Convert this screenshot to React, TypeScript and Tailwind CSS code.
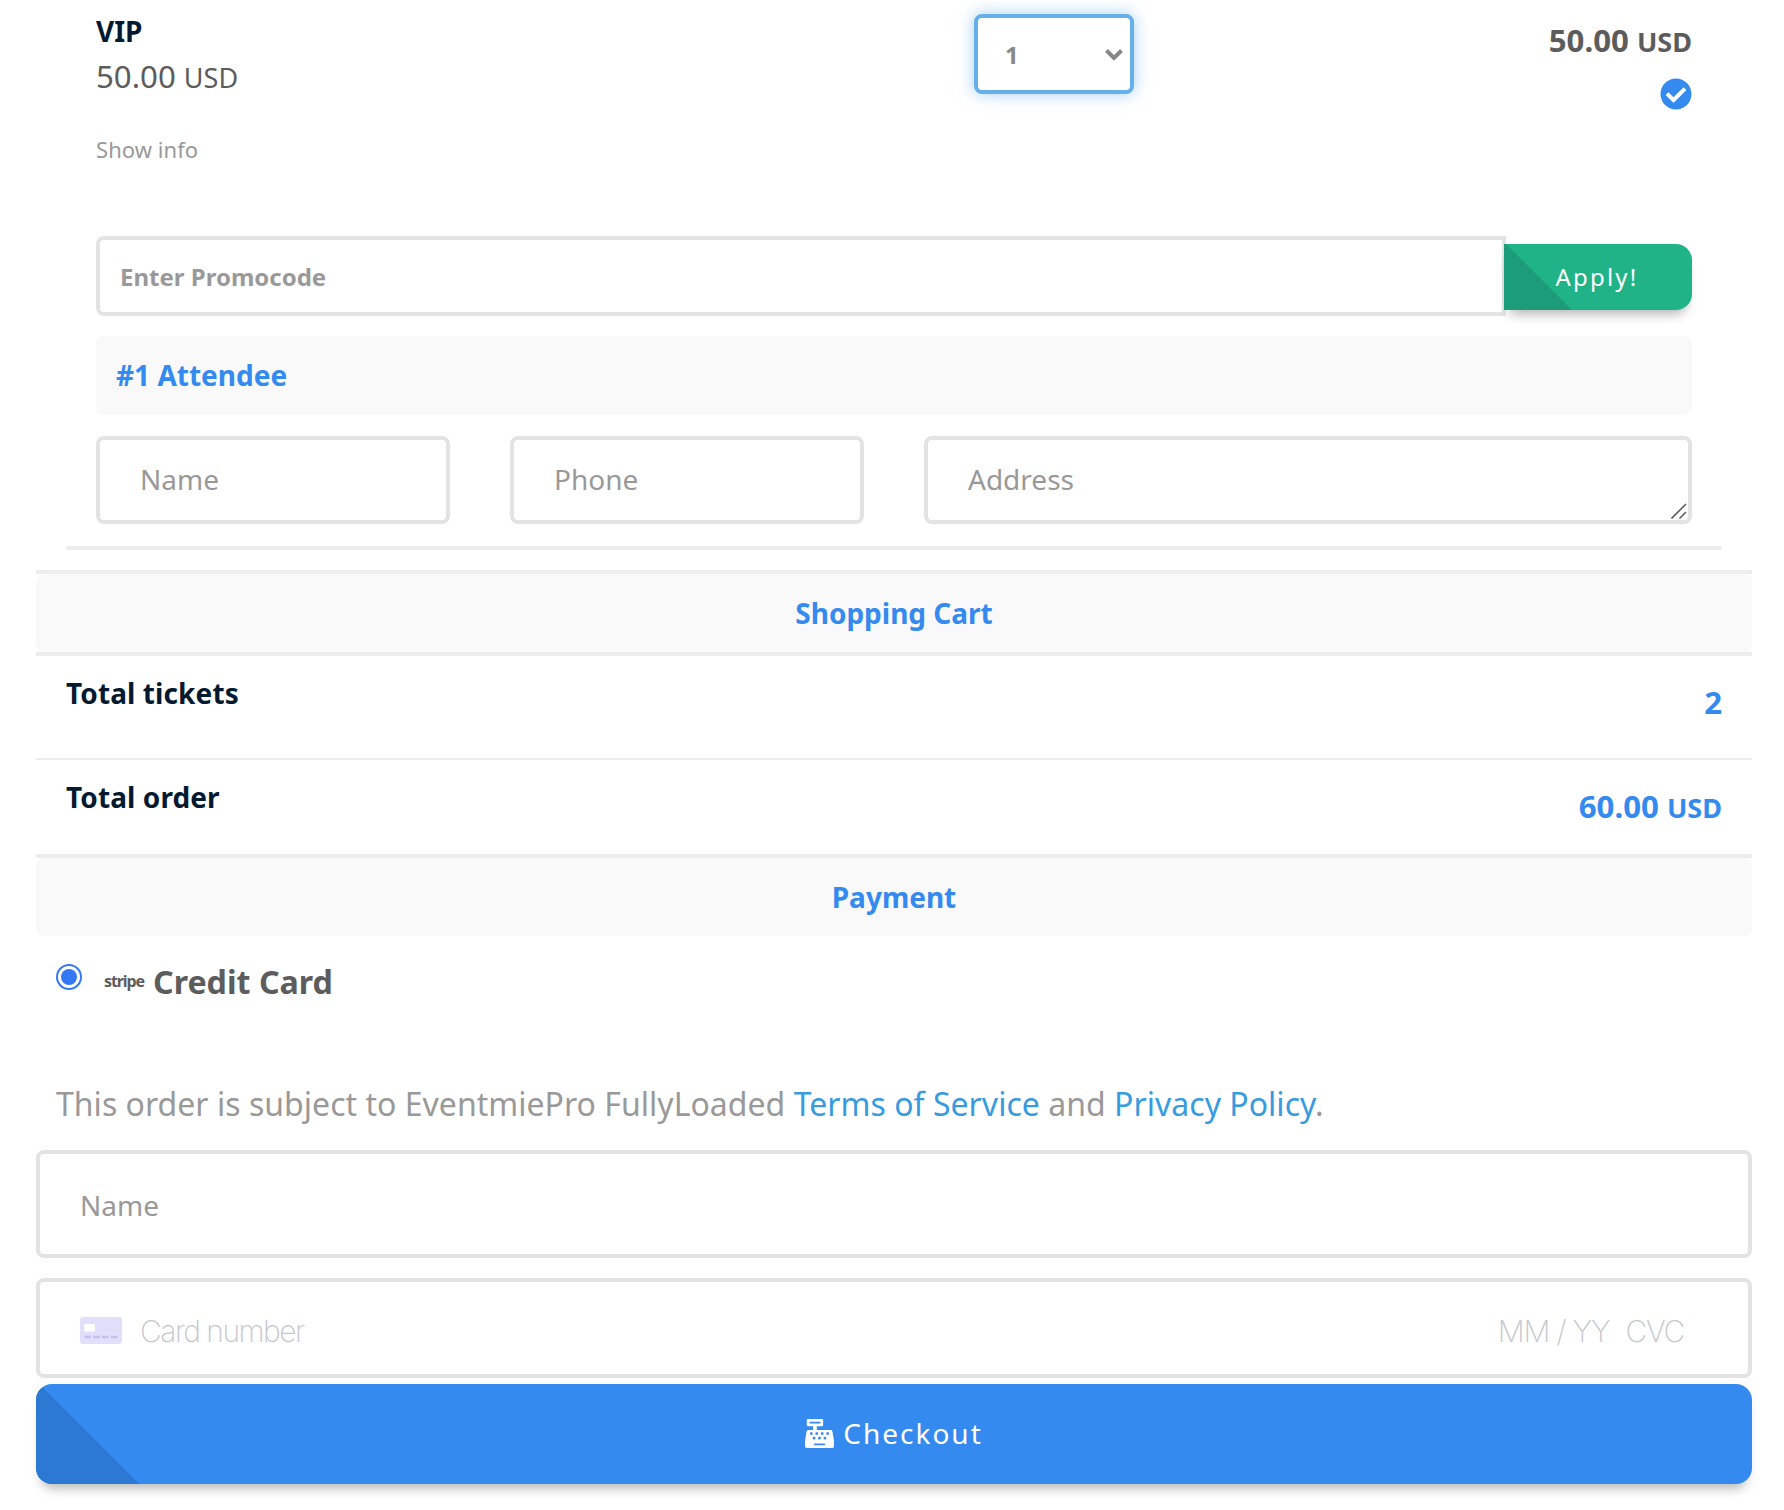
import type { ReactNode } from 'react';
import { FaCashRegister, FaCheckCircle } from 'react-icons/fa';

const field =
  'block border-4 border-[#e3e3e3] rounded-lg bg-white text-[28px] text-[#555] placeholder:text-[#999] placeholder:opacity-100 outline-none';

function Price({ amount, className }: { amount: string; className: string }) {
  return (
    <div className={className}>
      {amount} <span className="text-[27px] leading-none">USD</span>
    </div>
  );
}

function SectionTitle({ children, className = '' }: { children: ReactNode; className?: string }) {
  return (
    <h2 className={`rounded-lg bg-[#f9f9f9] text-[28px] font-bold leading-[78px] text-[#348aee] ${className}`}>
      {children}
    </h2>
  );
}

function TicketRow() {
  return (
    <div className="flex h-[236px] items-start justify-between">
      <div className="w-[878px] pt-[11px]">
        <h3 className="text-[28px] font-bold leading-[40px] text-[#041a30]">VIP</h3>
        <Price amount="50.00" className="text-[31.2px] leading-[50px] text-[#5c5c5c]" />
        <a className="mt-[33px] block text-[22px] leading-[30px] tracking-[0.05px] text-[#999]">Show info</a>
      </div>
      <div className="mt-[14px] flex h-20 w-40 items-center justify-between rounded-lg border-4 border-[#66afe9] bg-white pl-[27px] pr-[7px] text-2xl font-bold text-[#888] shadow-[0_0_16px_rgba(102,175,233,0.6)]">
        <span className="pt-[2px]">1</span>
        <svg className="mt-px h-[14px] w-[18px]" viewBox="0 0 18 14" fill="none" stroke="#888" strokeWidth="4">
          <path d="M1.5 2.5 9 10l7.5-7.5" />
        </svg>
      </div>
      <div className="flex flex-1 flex-col items-end pt-5">
        <Price amount="50.00" className="text-[31.2px] font-bold leading-[40px] text-[#5c5c5c]" />
        <FaCheckCircle className="mt-[18px] size-8 text-[#348aee]" />
      </div>
    </div>
  );
}

function Promocode() {
  return (
    <div className="flex items-start">
      <input
        placeholder="Enter Promocode"
        className="h-20 w-[1410px] rounded-l-lg border-4 border-[#e3e3e3] bg-white px-5 text-2xl font-bold text-[#555] outline-none placeholder:text-[#999] placeholder:opacity-100"
      />
      <button className="relative -ml-[2px] mt-2 h-[66px] flex-1 rounded-r-2xl bg-[#20b387] text-2xl tracking-[2.2px] text-white shadow-[0_10px_12px_-6px_rgba(0,0,0,0.3)]">
        <span className="absolute left-0 top-0 h-full w-[68px] bg-[#1c9c79] [clip-path:polygon(0_0,2px_0,100%_100%,0_100%)]" />
        <span className="relative pr-[2px]">Apply!</span>
      </button>
    </div>
  );
}

function AttendeeFields() {
  return (
    <div className="mt-[21px] flex h-[88px]">
      <input placeholder="Name" className={`h-[88px] w-[354px] px-10 pb-[2px] ${field}`} />
      <input placeholder="Phone" className={`ml-[60px] h-[88px] w-[354px] px-10 pb-[2px] ${field}`} />
      <div className="relative ml-[60px] flex-1">
        <textarea
          placeholder="Address"
          className={`h-[88px] w-full resize-none overflow-hidden px-10 py-[19px] leading-10 ${field}`}
        />
        <svg
          className="absolute bottom-[5px] right-[5px] h-4 w-4"
          viewBox="0 0 16 16"
          fill="none"
          stroke="#5f5f5f"
          strokeWidth="1.6"
        >
          <path d="M.5 15.5 15 1M8.5 15.5 15 9" />
        </svg>
      </div>
    </div>
  );
}

function TotalRow({ label, children, className }: { label: string; children: ReactNode; className: string }) {
  return (
    <div className={`flex justify-between px-[30px] ${className}`}>
      <div className="pt-[17px] text-[28px] font-bold leading-[40px] tracking-[0.1px] text-[#041a30]">{label}</div>
      <div className="pt-[25px] text-[31.2px] font-bold leading-[42px] text-[#348aee]">{children}</div>
    </div>
  );
}

function CardIcon() {
  return (
    <svg className="h-[27px] w-[42px]" viewBox="0 0 42 27">
      <rect width="42" height="27" rx="3" fill="#e0e0fa" />
      <rect x="4" y="7" width="11" height="7.5" rx="1.5" fill="#fff" />
      <path d="M4.500 20h6.500M13.500 20h6.500M22 20h6.500M31 20h6.500" stroke="#c3c0f2" strokeWidth="2.600" />
    </svg>
  );
}

export default function App() {
  return (
    <main className="h-[1510px] w-[1784px] overflow-hidden bg-white pl-9 pr-8 font-['Noto_Sans',sans-serif]">
      <section className="px-[60px]">
        <TicketRow />
        <Promocode />
        <SectionTitle className="mt-5 h-[79px] px-5">#1 Attendee</SectionTitle>
        <AttendeeFields />
      </section>
      <div className="mx-[30px] mt-[22px] h-1 rounded-full bg-[#ededed]" />

      <section className="mt-5 border-t-4 border-[#ededed]">
        <SectionTitle className="h-[78px] text-center">Shopping Cart</SectionTitle>
        <TotalRow label="Total tickets" className="h-[106px] border-t-4 border-[#ededed]">
          2
        </TotalRow>
        <TotalRow label="Total order" className="h-[96px] border-t-2 border-[#ededed]">
          60.00 <span className="text-[27px] leading-none">USD</span>
        </TotalRow>
      </section>

      <section className="border-t-4 border-[#ededed]">
        <SectionTitle className="h-[78px] text-center">Payment</SectionTitle>
        <label className="flex h-[134px] items-start pl-5">
          <span className="mt-7 flex size-[26px] items-center justify-center rounded-full border-2 border-[#3478f6] bg-white">
            <span className="size-4 rounded-full bg-[#3478f6]" />
          </span>
          <span className="ml-[22px] mt-[35px] w-[49px] text-[16px] font-bold leading-[20px] tracking-[-1.1px] text-[#5c5c5c]">
            stripe
          </span>
          <span className="mt-[26px] text-[32.2px] font-bold leading-[40px] text-[#5c5c5c]">Credit Card</span>
        </label>
        <p className="h-20 pl-5 pt-[13px] text-[32px] leading-[42px] tracking-[0.025px] text-[#999]">
          This order is subject to EventmiePro FullyLoaded <a className="text-[#369bdf]">Terms of Service</a> and{' '}
          <a className="text-[#369bdf]">Privacy Policy</a>.
        </p>
        <input placeholder="Name" className={`h-[108px] w-full px-10 pt-[2px] ${field}`} />
        <div className="mt-5 flex h-[100px] items-center rounded-lg border-4 border-[#e3e3e3] bg-white pl-10 pr-16 pt-1 font-['Inter','Roboto',sans-serif] text-[30px] font-extralight tracking-[-1.5px] text-[#c4c7cc]">
          <CardIcon />
          <span className="ml-[18px] flex-1 pt-[2px]">Card number</span>
          <span className="pt-[2px] tracking-[-1.2px]">MM / YY</span>
          <span className="ml-4 pt-[2px] tracking-[-1.2px]">CVC</span>
        </div>
        <button className="relative mt-[6px] flex h-[100px] w-full items-center justify-center rounded-2xl bg-[#348aee] pb-[2px] text-[28px] tracking-[2px] text-white shadow-[0_10px_12px_-6px_rgba(0,0,0,0.3)]">
          <span className="absolute left-0 top-0 h-full w-[103px] rounded-l-2xl bg-[#2b79d2] [clip-path:polygon(0_0,3px_0,100%_100%,0_100%)]" />
          <FaCashRegister className="size-[29px]" />
          <span className="ml-[9px]">Checkout</span>
        </button>
      </section>
    </main>
  );
}
